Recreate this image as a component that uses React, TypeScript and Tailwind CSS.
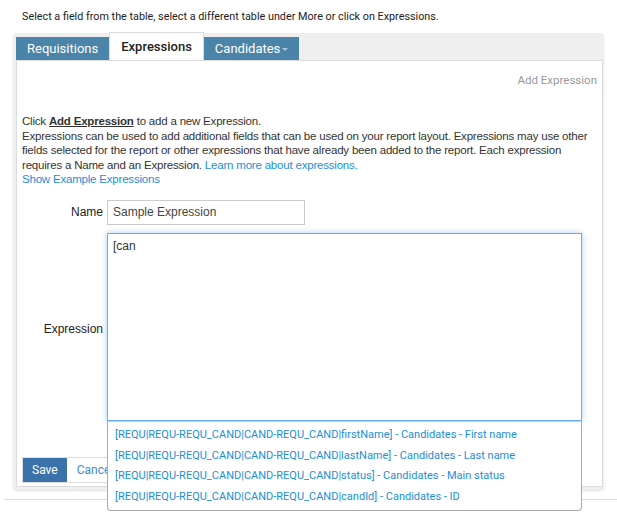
import React, { useState } from 'react';

const suggestions = [
  '[REQU|REQU-REQU_CAND|CAND-REQU_CAND|firstName] - Candidates - First name',
  '[REQU|REQU-REQU_CAND|CAND-REQU_CAND|lastName] - Candidates - Last name',
  '[REQU|REQU-REQU_CAND|CAND-REQU_CAND|status] - Candidates - Main status',
  '[REQU|REQU-REQU_CAND|CAND-REQU_CAND|candId] - Candidates - ID',
];

const App: React.FC = () => {
  const [name, setName] = useState('Sample Expression');
  const [expr, setExpr] = useState('[can');

  return (
    <div className="relative w-[617px] h-[525px] bg-white overflow-hidden font-['Liberation_Sans',Arial,sans-serif] text-[#333]">
      <div className="pl-[22px] pt-[9px] h-[33px] font-['Roboto',sans-serif] text-[10.8px] text-[#222]">
        Select a field from the table, select a different table under More or click on Expressions.
      </div>

      <div className="mx-[13px] bg-[#efefef] rounded-[4px] pl-[3px] pr-px pb-[3px] shadow-[0_1px_2px_rgba(0,0,0,0.12)]">
        {/* tabs */}
        <div className="flex items-end h-[27px] font-['Roboto',sans-serif] text-[13px]">
          <div className="h-[23px] px-[11px] flex items-center bg-[#4a84a8] text-white">Requisitions</div>
          <div className="h-[28px] -mt-px px-[11px] flex items-center bg-white border border-b-0 border-[#dcdcdc] text-[#222] font-medium">
            Expressions
          </div>
          <div className="h-[23px] px-[11px] flex items-center bg-[#4a84a8] text-white">
            Candidates
            <span className="ml-[2px] mt-[1px] border-x-[3px] border-t-[3px] border-x-transparent border-t-[#a9c5d8]" />
          </div>
        </div>

        {/* content */}
        <div className="bg-white border border-[#dcdcdc] h-[427px] pl-[5px] pr-[5px] flex flex-col">
          <div className="flex justify-end pt-[11px] font-['Roboto',sans-serif] text-[11.5px] text-[#999]">
            Add Expression
          </div>

          <div className="mt-[25px] text-[11.5px] tracking-[-0.2px] leading-[14.5px] w-[576px]">
            <div>
              Click <span className="font-bold underline">Add Expression</span> to add a new Expression.
            </div>
            <div>
              Expressions can be used to add additional fields that can be used on your report layout. Expressions may use
              other fields selected for the report or other expressions that have already been added to the report. Each
              expression requires a Name and an Expression.{' '}
              <span className="text-[#1b8fd6]">Learn more about expressions.</span>
            </div>
            <div className="text-[#1b8fd6]">Show Example Expressions</div>
          </div>

          <div className="mt-[13px] flex items-center gap-[4px]">
            <label className="w-[81px] text-right text-[12px] text-[#222]">Name</label>
            <input
              value={name}
              onChange={(e) => setName(e.target.value)}
              className="w-[198px] h-[25px] border border-[#ccc] px-[5px] text-[12px] text-[#444] outline-none"
            />
          </div>

          <div className="mt-[8px] flex items-center gap-[4px]">
            <label className="w-[81px] pt-[4px] text-right text-[12px] text-[#222]">Expression</label>
            <textarea
              value={expr}
              onChange={(e) => setExpr(e.target.value)}
              className="w-[475px] h-[188px] border border-[#66afe9] shadow-[0_0_6px_rgba(102,175,233,0.6)] px-[5px] py-[3px] text-[12px] text-[#333] outline-none resize-none"
            />
          </div>

          <div className="mt-[36px] flex">
            <div className="flex border border-[#ddd]">
              <button className="h-[24px] px-[9px] bg-[#3a73a9] text-white font-['Roboto',sans-serif] text-[12px]">
                Save
              </button>
              <button className="h-[24px] px-[10px] bg-white text-[#3a8bd0] font-['Roboto',sans-serif] text-[12px]">
                Cancel
              </button>
            </div>
          </div>
        </div>
      </div>

      <div className="mt-[9px] ml-[4px] border-t border-[#dcdcdc]" />

      {/* autocomplete popup */}
      <ul className="absolute left-[107px] top-[421px] w-[475px] bg-white border border-[#aaa] border-t-[#ccc] rounded-b-[4px] py-[3px] font-['Roboto',sans-serif] text-[11px] text-[#1b8fd6]">
        {suggestions.map((s) => (
          <li key={s} className="h-[20.5px] leading-[20.5px] px-[7px] whitespace-nowrap">
            {s}
          </li>
        ))}
      </ul>
    </div>
  );
};

export default App;
